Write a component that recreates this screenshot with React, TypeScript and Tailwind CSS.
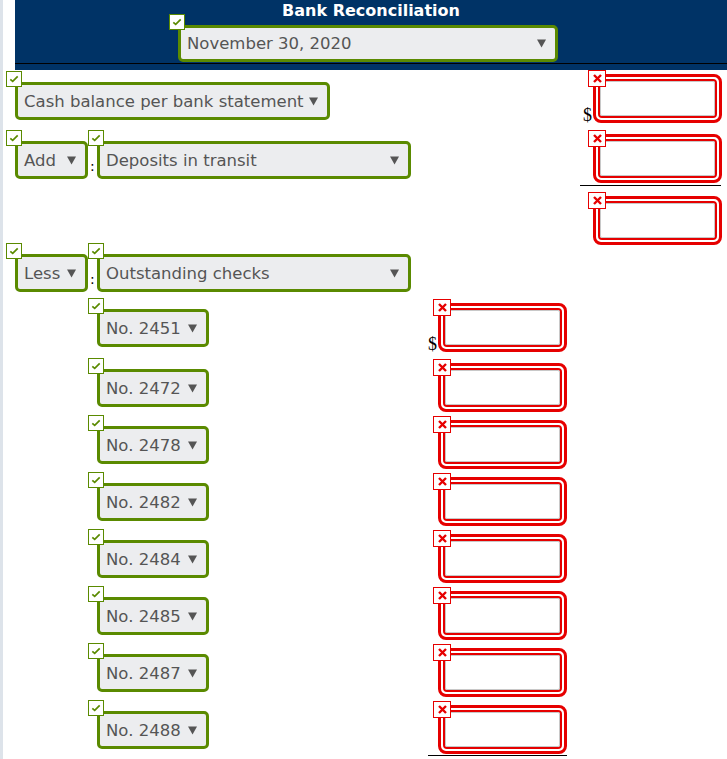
import React from "react";

const checks = ["No. 2451", "No. 2472", "No. 2478", "No. 2482", "No. 2484", "No. 2485", "No. 2487", "No. 2488"];

const Tick = () => (
  <span className="absolute -left-[9px] -top-[11px] w-[16px] h-[16px] bg-white border-[1.5px] border-[#5a8a00] flex items-center justify-center">
    <svg width="10" height="8" viewBox="0 0 10 8">
      <path d="M1.3 4.3 L3.7 6.4 L8.7 1.4" stroke="#5a8a00" strokeWidth="1.7" fill="none" />
    </svg>
  </span>
);

const Arrow = () => (
  <svg width="9" height="9" viewBox="0 0 9 9" className="shrink-0 -mt-[2px]">
    <path d="M0 0.5 H9 L4.5 8.5 Z" fill="#555" />
  </svg>
);

const Select = ({ text, width, height = "h-[38px]" }: { text: string; width: string; height?: string }) => (
  <div className="relative">
    <Tick />
    <div
      className={`${width} ${height} border-[3px] border-[#5a8a00] rounded-[5px] bg-[#ecedef] flex items-center justify-between pl-[6px] pr-[9px] pt-[2px] text-[16.5px] text-[#555] whitespace-nowrap`}
    >
      <span>{text}</span>
      <Arrow />
    </div>
  </div>
);

const RedBox = () => (
  <div className="relative">
    <span className="absolute -left-[5px] -top-[4px] w-[18px] h-[17px] bg-white border-[1.5px] border-[#e60000] flex items-center justify-center z-10">
      <svg width="9" height="9" viewBox="0 0 9 9">
        <path d="M1 1 L8 8 M8 1 L1 8" stroke="#e60000" strokeWidth="2.4" />
      </svg>
    </span>
    <div className="w-[129px] h-[49px] border-[3px] border-[#e60000] rounded-[8px] p-[2px] bg-white">
      <div className="h-full border-2 border-[#e60000] rounded-[4px]">
        <div className="h-full border border-[#c8c8c8] rounded-[2px] bg-white" />
      </div>
    </div>
  </div>
);

const Dollar = ({ show }: { show?: boolean }) => (
  <span className="w-[10px] text-[18px] leading-[18px] text-black font-['Liberation_Serif',serif] -mb-[1px]">
    {show ? "$" : ""}
  </span>
);

export default function App() {
  return (
    <div className="min-h-screen bg-white border-l-[3px] border-[#dde3ea] font-['DejaVu_Sans',sans-serif]">
      {/* Header */}
      <div className="ml-[12px] bg-[#003366]">
        <div className="h-[22px] leading-[22px] text-center text-white font-bold text-[16px]">Bank Reconciliation</div>
        <div className="pl-[163px] mt-[3px]">
          <Select text="November 30, 2020" width="w-[380px]" height="h-[37px]" />
        </div>
        <div className="mt-[1px] h-px bg-black" />
        <div className="h-[6px]" />
      </div>

      {/* Row: cash balance */}
      <div className="flex h-[57px]">
        <div className="w-[421px] pl-[12px] pt-[12px]">
          <Select text="Cash balance per bank statement" width="w-[315px]" />
        </div>
        <div className="w-[150px]" />
        <div className="pl-[9px] pt-[4px] flex items-end self-start">
          <Dollar show />
          <RedBox />
        </div>
      </div>

      {/* Row: add deposits */}
      <div className="flex h-[63px]">
        <div className="w-[421px] pl-[12px] pt-[14px] flex items-start">
          <Select text="Add" width="w-[73px]" />
          <span className="w-[9px] h-[38px] flex items-end pb-[2px] pl-[2px] text-[14px] text-black">:</span>
          <Select text="Deposits in transit" width="w-[314px]" />
        </div>
        <div className="w-[150px]" />
        <div className="pt-[7px]">
          <div className="pl-[19px]">
            <RedBox />
          </div>
          <div className="mt-[2px] ml-[6px] w-[141px] h-px bg-black" />
        </div>
      </div>

      {/* Row: subtotal */}
      <div className="flex h-[57px]">
        <div className="w-[571px]" />
        <div className="pl-[19px] pt-[6px]">
          <RedBox />
        </div>
      </div>

      {/* Row: less outstanding */}
      <div className="flex h-[49px]">
        <div className="w-[421px] pl-[12px] pt-[7px] flex items-start">
          <Select text="Less" width="w-[73px]" />
          <span className="w-[9px] h-[38px] flex items-end pb-[2px] pl-[2px] text-[14px] text-black">:</span>
          <Select text="Outstanding checks" width="w-[314px]" />
        </div>
      </div>

      {checks.map((c, i) => (
        <div key={c} className={`flex ${i === 0 ? "h-[60px]" : "h-[57px]"}`}>
          <div className="w-[421px] pl-[94px] pt-[13px]">
            <Select text={c} width="w-[112px]" />
          </div>
          <div className="pt-[7px] pl-[4px]">
            <div className="flex items-end">
              <Dollar show={i === 0} />
              <RedBox />
            </div>
            {i === checks.length - 1 && <div className="mt-[1px] w-[139px] h-px bg-black" />}
          </div>
        </div>
      ))}
    </div>
  );
}
